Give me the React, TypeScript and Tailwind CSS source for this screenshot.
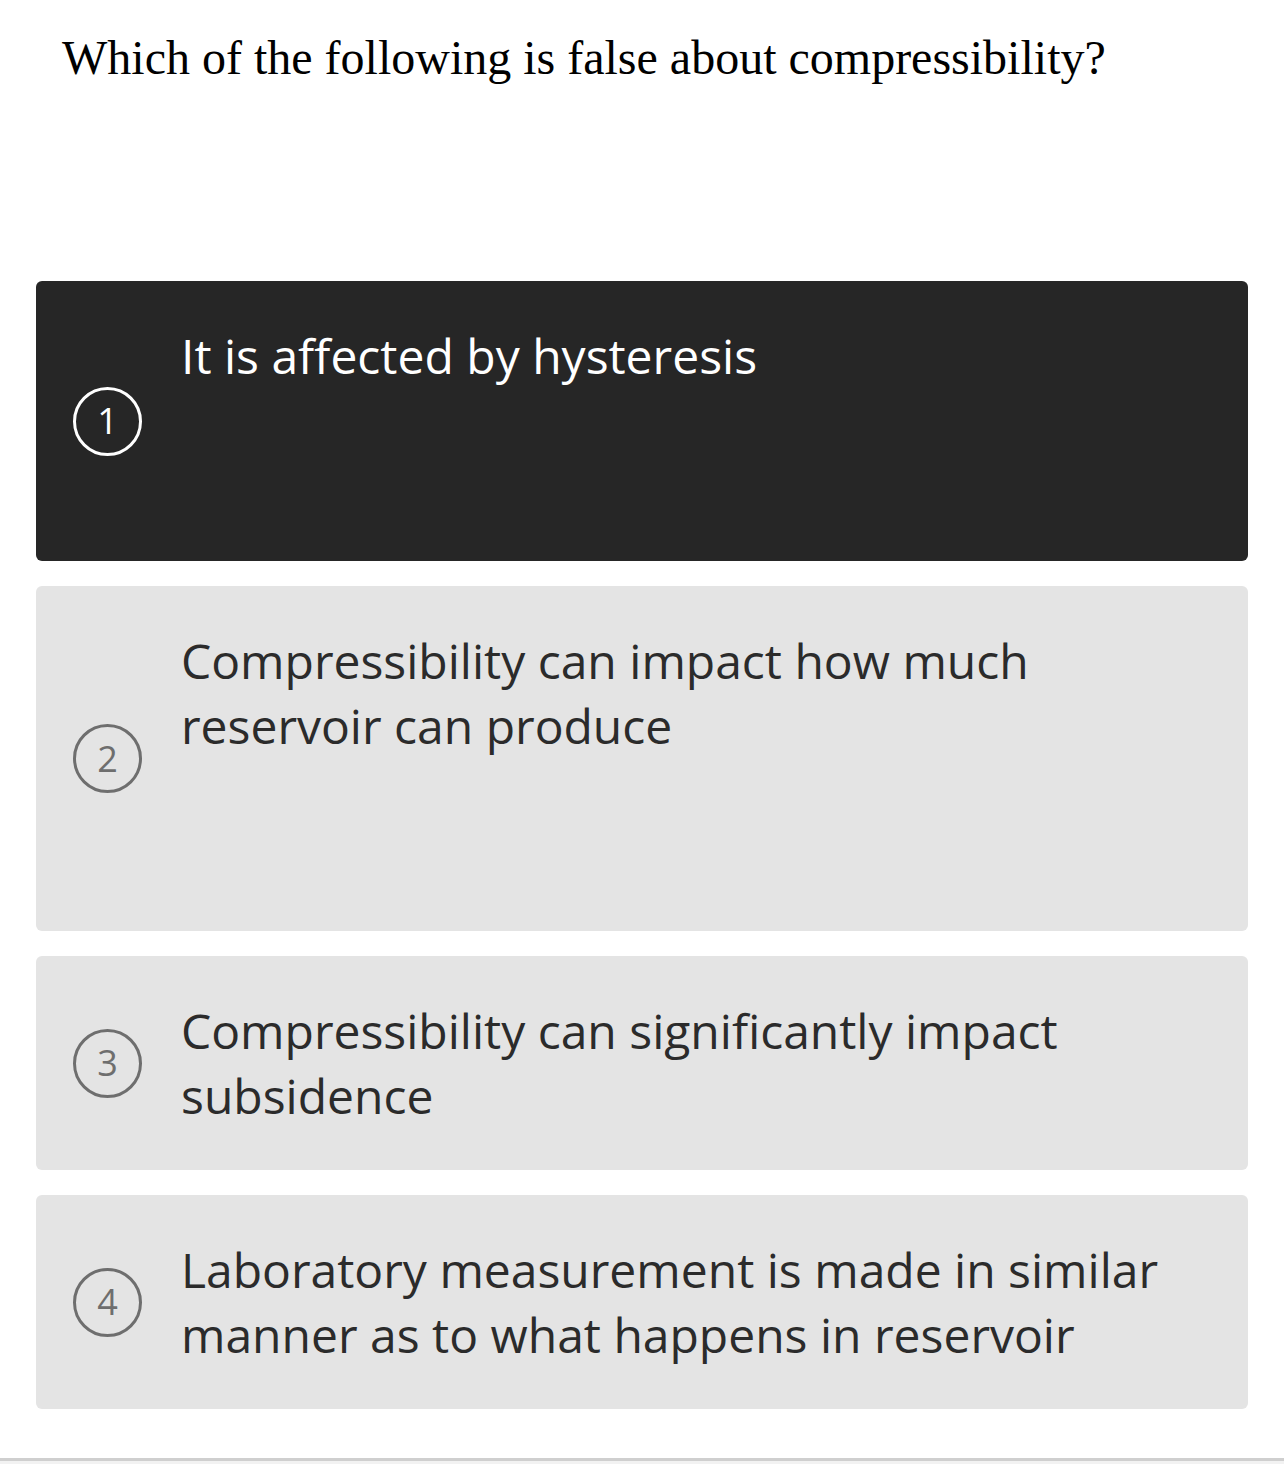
const options = [
  { n: 1, lines: ["It is affected by hysteresis"], h: "h-[280px]", active: true },
  { n: 2, lines: ["Compressibility can impact how much", "reservoir can produce"], h: "h-[345px]", active: false },
  { n: 3, lines: ["Compressibility can significantly impact", "subsidence"], h: "h-[214px]", active: false },
  { n: 4, lines: ["Laboratory measurement is made in similar", "manner as to what happens in reservoir"], h: "h-[214px]", active: false },
];

export default function App() {
  return (
    <div className="flex h-[1464px] w-[1284px] flex-col overflow-hidden bg-white">
      <h1 className="pl-[62px] pt-[30px] font-['Liberation_Serif',serif] text-[48px] leading-[56px] text-black">
        Which of the following is false about compressibility?
      </h1>

      <div className="mt-[195px] flex flex-col gap-[25px] px-[36px]">
        {options.map((o) => (
          <div
            key={o.n}
            className={`relative flex rounded-[6px] pl-[37px] pr-[40px] ${o.h} ${o.active ? "bg-[#262626] text-white" : "bg-[#e4e4e4] text-[#2b2b2b]"}`}
          >
            <div className="flex items-center">
              <span
                className={`flex h-[69px] w-[69px] items-center justify-center rounded-full border-[3px] font-['Open_Sans',sans-serif] text-[36px] ${o.active ? "border-white text-white" : "border-[#6e6e6e] text-[#6e6e6e]"}`}
              >
                {o.n}
              </span>
            </div>
            <p className="ml-[39px] pt-[42px] font-['Open_Sans',sans-serif] text-[48px] leading-[65px]">
              {o.lines.map((l, i) => (
                <span key={i} className="block">
                  {l}
                </span>
              ))}
            </p>
          </div>
        ))}
      </div>

      <div className="mt-auto h-[6px] border-t-[3px] border-[#cfcfcf] bg-[#f2f2f2]" />
    </div>
  );
}
